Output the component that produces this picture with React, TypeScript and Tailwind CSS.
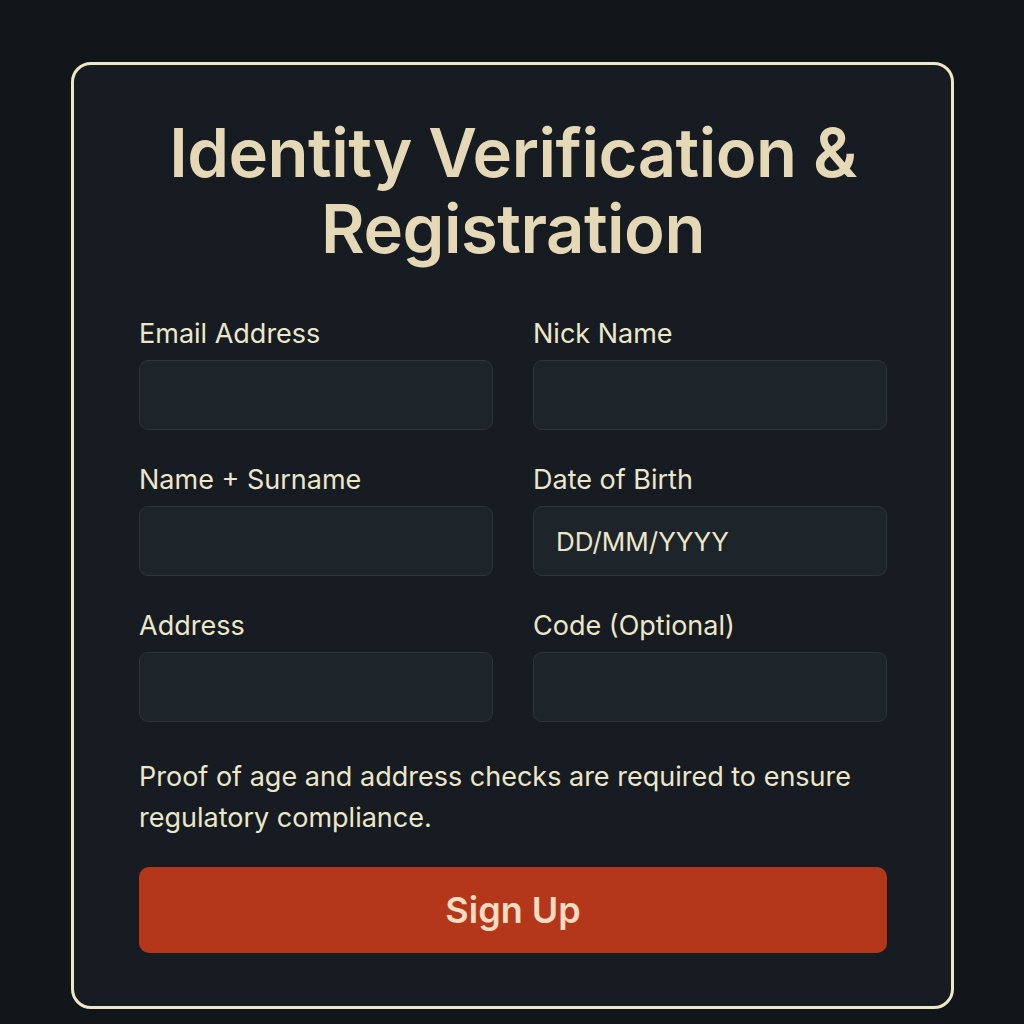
const fields = [
  { label: 'Email Address' },
  { label: 'Nick Name' },
  { label: 'Name + Surname' },
  { label: 'Date of Birth', placeholder: 'DD/MM/YYYY' },
  { label: 'Address' },
  { label: 'Code (Optional)' },
]

export default function App() {
  return (
    <div className="min-h-screen bg-[#11161a] pt-[62px] pb-[14px] pl-[71px] pr-[70px]" style={{ fontFamily: 'Inter, "Noto Sans", sans-serif' }}>
      <div className="h-[947px] rounded-[20px] border-[3px] border-[#efe8c6] bg-[#171c22] pl-[65px] pr-[64px] pt-[50px]">
        <h1 className="text-center text-[67px] font-semibold leading-[76px] tracking-[-0.5px] text-[#e4d8b6]">
          Identity Verification &amp;<br />Registration
        </h1>
        <div className="mt-[51px] grid grid-cols-2 gap-x-[40px] gap-y-[34px]">
          {fields.map(f => (
            <div key={f.label}>
              <label className="block text-[27px] leading-[32px] text-[#ece7cb]">{f.label}</label>
              <div className="mt-[10px] flex h-[70px] items-center rounded-[9px] border border-[#2d353a] bg-[#1e252a] px-[22px] text-[26px] text-[#ece7cb]">
                {f.placeholder}
              </div>
            </div>
          ))}
        </div>
        <p className="mt-[34px] text-[27px] leading-[41px] text-[#ece7cb]">
          Proof of age and address checks are required to ensure regulatory compliance.
        </p>
        <button className="mt-[29px] h-[86px] w-full rounded-[10px] bg-[#b5371b] text-[36px] font-semibold text-[#f6dcc0]">
          Sign Up
        </button>
      </div>
    </div>
  )
}
